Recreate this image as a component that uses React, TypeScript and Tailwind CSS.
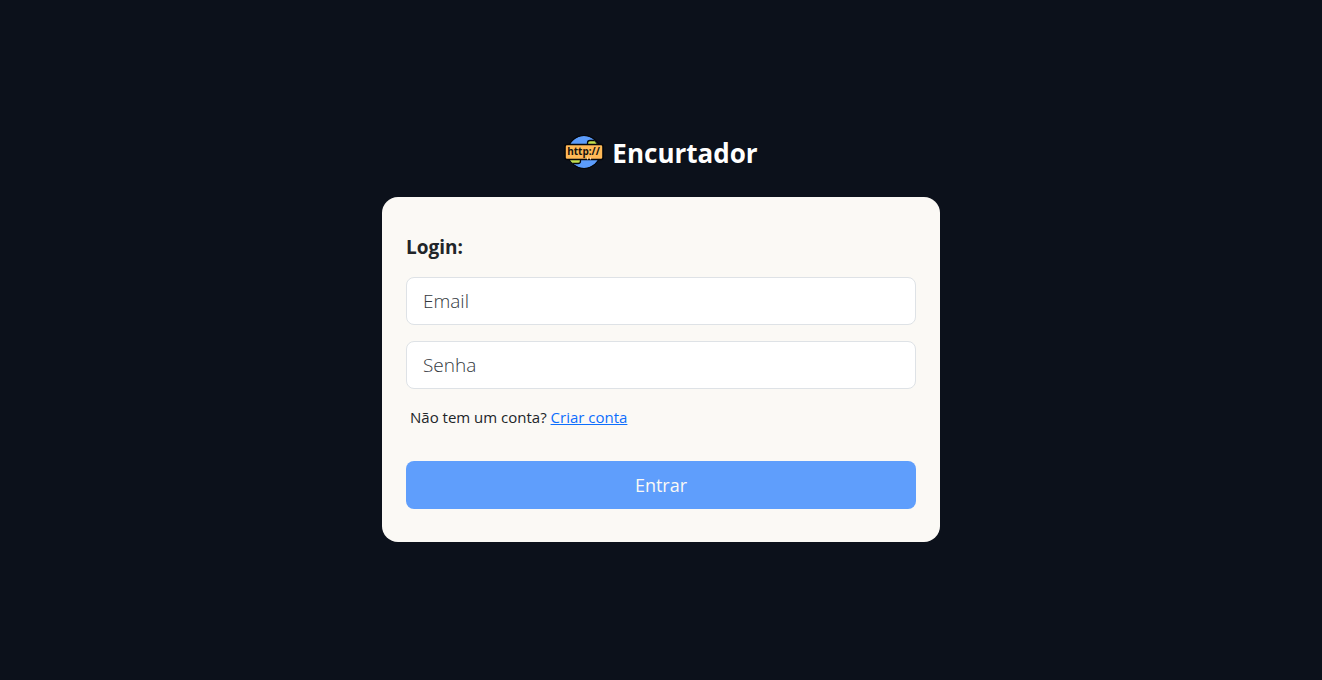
function Logo() {
  return (
    <svg className="h-9 w-10 shrink-0" viewBox="0 0 40 36" aria-hidden="true">
      <defs>
        <clipPath id="globe">
          <circle cx="20" cy="17" r="16" />
        </clipPath>
      </defs>
      <circle cx="20" cy="17" r="17" fill="#05070b" />
      <g clipPath="url(#globe)">
        <circle cx="20" cy="17" r="16" fill="#5c9cfb" />
        <path d="M23.500 12V8q0-2.500 2.500-2.500h5l6 8z" fill="#c3e04d" stroke="#05070b" strokeWidth="1.300" />
        <path d="M3 24h13.500v2q0 2.500-2.500 2.500H6z" fill="#c3e04d" stroke="#05070b" strokeWidth="1.300" />
      </g>
      <rect x="1" y="9.500" width="38" height="15" rx="2" fill="#ffb957" stroke="#05070b" strokeWidth="1.600" />
      <text
        x="19.500"
        y="20"
        textAnchor="middle"
        fill="#15120d"
        fontFamily="'Open Sans', sans-serif"
        fontSize="10"
        fontWeight="700"
      >
        http://
      </text>
      <path d="M23.500 24.500v-2M26.500 24.500v-2" stroke="#ffe3ba" strokeWidth="1" />
    </svg>
  );
}

const fieldClass =
  "block h-12 w-full rounded-lg border border-[#dee2e6] bg-white px-4 text-[19px] leading-7 font-light text-[#212529] placeholder:text-[#33383d] focus:border-[#86b7fe] focus:outline-none";

export default function App() {
  return (
    <main className="flex min-h-screen flex-col items-center justify-center bg-[#0c111b] pb-1.5 font-['Open_Sans','Noto_Sans',sans-serif] text-[#212529]">
      <header className="mb-6 flex h-10 items-center gap-2">
        <Logo />
        <h1 className="text-[26px] leading-10 font-bold text-white">Encurtador</h1>
      </header>
      <section className="w-full max-w-[558px] rounded-2xl bg-[#fbf9f5] px-6 pt-9 pb-[33px]">
        <form onSubmit={(event) => event.preventDefault()}>
          <h2 className="mb-4 text-[19px] leading-7 font-bold">Login:</h2>
          <div className="space-y-4">
            <input type="email" placeholder="Email" aria-label="Email" className={fieldClass} />
            <input type="password" placeholder="Senha" aria-label="Senha" className={fieldClass} />
          </div>
          <p className="mt-4 px-1 text-[15px] leading-6">
            Não tem um conta?{" "}
            <a href="#criar-conta" className="text-[#0d6efd] underline">
              Criar conta
            </a>
          </p>
          <button type="submit" className="mt-8 h-12 w-full rounded-lg bg-[#5f9efc] text-[18px] leading-7 font-medium text-[#faf9f5]">
            Entrar
          </button>
        </form>
      </section>
    </main>
  );
}
